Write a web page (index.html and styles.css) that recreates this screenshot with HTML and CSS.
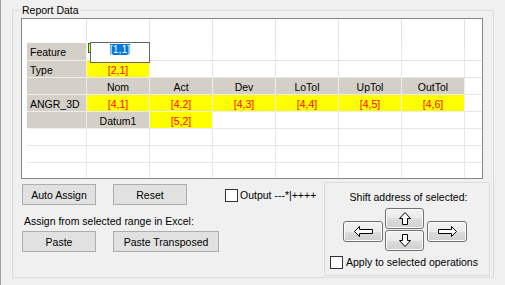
FILE: index.html
```html
<!DOCTYPE html>
<html lang="en">
<head>
    <meta charset="UTF-8">
    <meta name="viewport" content="width=device-width, initial-scale=1.0">
    <title>Report Data</title>
    <link rel="stylesheet" href="styles.css">
</head>
<body>
    <fieldset class="group">
        <legend>Report Data</legend>
        <div class="sheet">
            <div class="grid" id="grid"></div>
            <div class="mark"></div>
            <div class="editor"><span class="sel">[1,1]</span></div>
        </div>
        <div class="controls">
            <div class="assign">
                <div class="btn-row">
                    <button class="btn">Auto Assign</button>
                    <button class="btn">Reset</button>
                    <label class="check output"><span class="box"></span>Output ---*|++++</label>
                </div>
                <div class="hint">Assign from selected range in Excel:</div>
                <div class="btn-row">
                    <button class="btn">Paste</button>
                    <button class="btn btn-wide">Paste Transposed</button>
                </div>
            </div>
            <div class="shift">
                <div class="shift-title">Shift address of selected:</div>
                <div class="arrows">
                    <button class="arrow side">
                        <svg width="19" height="11" viewBox="0 0 19 11"><path d="M0.5 5.5 L5.5 0.5 V3.5 H18.5 V7.5 H5.5 V10.5 Z" fill="#fff" stroke="#000"/></svg>
                    </button>
                    <div class="updown">
                        <button class="arrow">
                            <svg width="12" height="13" viewBox="0 0 12 13"><path d="M6 0.5 L11.5 6.5 H8.5 V12.5 H3.5 V6.5 H0.5 Z" fill="#fff" stroke="#000"/></svg>
                        </button>
                        <button class="arrow">
                            <svg width="12" height="13" viewBox="0 0 12 13"><path d="M6 12.5 L11.5 6.5 H8.5 V0.5 H3.5 V6.5 H0.5 Z" fill="#fff" stroke="#000"/></svg>
                        </button>
                    </div>
                    <button class="arrow side">
                        <svg width="19" height="11" viewBox="0 0 19 11"><path d="M18.5 5.5 L13.5 0.5 V3.5 H0.5 V7.5 H13.5 V10.5 Z" fill="#fff" stroke="#000"/></svg>
                    </button>
                </div>
                <label class="check apply"><span class="box"></span>Apply to selected operations</label>
            </div>
        </div>
    </fieldset>

    <script>
        var grid = document.getElementById("grid")
        var types = { t: "top", w: "", g: "gray", gl: "gray left", y: "yellow" }
        var rows = [
            ["t", "t", "t", "t", "t", "t", "t", "t"],
            ["gl:Feature", "w", "w", "w", "w", "w", "w", "w"],
            ["gl:Type", "y:[2,1]", "w", "w", "w", "w", "w", "w"],
            ["g", "g:Nom", "g:Act", "g:Dev", "g:LoTol", "g:UpTol", "g:OutTol", "w"],
            ["gl:ANGR_3D", "y:[4,1]", "y:[4,2]", "y:[4,3]", "y:[4,4]", "y:[4,5]", "y:[4,6]", "w"],
            ["g", "g:Datum1", "y:[5,2]", "w", "w", "w", "w", "w"],
            ["w", "w", "w", "w", "w", "w", "w", "w"],
            ["w", "w", "w", "w", "w", "w", "w", "w"],
            ["w", "w", "w", "w", "w", "w", "w", "w"]
        ]

        var html = ""
        for (const row of rows) {
            html += `<div class="cell edge"></div>`
            for (const c of row) {
                const parts = c.split(":")
                html += `<div class="cell ${types[parts[0]]}">${parts[1] || ""}</div>`
            }
        }
        grid.innerHTML = html
    </script>
</body>
</html>
```

FILE: styles.css
```css
body {
    font-family: "Liberation Sans", Arial, sans-serif;
    font-size: 10.5px;
    color: #000000;
    background: #f0f0f0;
    margin: 0;
    height: 285px;
    box-sizing: border-box;
    border-left: 1px solid #a0a0a0;
    overflow: hidden;
}

.group {
    margin: 4px 0 0 11px;
    width: 482px;
    box-sizing: border-box;
    border: 1px solid #dcdcdc;
    padding: 1px 3px 1px 8px;
    min-inline-size: 0;
}

.group legend {
    padding: 0 1px;
    line-height: 13px;
}

.sheet {
    position: relative;
    width: 462px;
    height: 161px;
    box-sizing: border-box;
    border: 1px solid #828790;
    background: #ffffff;
    overflow: hidden;
}

.grid {
    display: grid;
    grid-template-columns: 5px 60px repeat(6, 63px) 17px;
    grid-template-rows: 24px 18px repeat(7, 17px);
}

.cell {
    box-sizing: border-box;
    border-right: 1px solid #e6e6e6;
    border-bottom: 1px solid #e6e6e6;
    padding-top: 1px;
    line-height: 16px;
    text-align: center;
    white-space: nowrap;
    overflow: hidden;
}

.cell:nth-child(9n) {
    border-right: none;
}

.cell.edge {
    border: none;
}

.cell.top {
    border-bottom: none;
    border-right-color: #e3e3e3;
}

.cell.gray {
    background: #d4d0c8;
    border-color: #eeeeee;
}

.cell.left {
    text-align: left;
    padding-left: 3px;
}

.cell.yellow {
    background: #ffff00;
    color: #ff0000;
    border-color: #eeeeee;
}

.mark {
    position: absolute;
    left: 66px;
    top: 24px;
    width: 1px;
    height: 8px;
    background: #ffff00;
    border: 1px solid #1e6b3c;
    border-right: none;
}

.editor {
    position: absolute;
    left: 68px;
    top: 23px;
    width: 60px;
    height: 21px;
    box-sizing: border-box;
    border: 1px solid #646464;
    background: #ffffff;
    display: flex;
    justify-content: center;
    padding-top: 1px;
}

.sel {
    display: inline-block;
    height: 11px;
    line-height: 11px;
    background: #0078d7;
    color: #ffffff;
}

.controls {
    display: flex;
    justify-content: space-between;
    margin-top: 3px;
}

.assign {
    width: 303px;
    padding-top: 2px;
}

.btn-row {
    display: flex;
    align-items: flex-start;
    padding-left: 1px;
}

.btn {
    width: 74px;
    height: 21px;
    margin: 0 17px 0 0;
    padding: 0;
    font-family: inherit;
    font-size: 10.5px;
    color: #000000;
    background: #e1e1e1;
    border: 1px solid #adadad;
}

.btn-wide {
    width: 106px;
}

.check {
    display: flex;
    align-items: center;
    line-height: 13px;
}

.check .box {
    width: 13px;
    height: 13px;
    box-sizing: border-box;
    border: 1px solid #333333;
    background: #ffffff;
    margin-right: 2px;
}

.output {
    margin-left: 21px;
    margin-top: 5px;
}

.hint {
    margin: 10px 0 3px 3px;
    line-height: 13px;
}

.shift {
    width: 166px;
    height: 94px;
    box-sizing: border-box;
    border: 1px solid #dcdcdc;
}

.shift-title {
    text-align: center;
    padding: 8px 0 0 3px;
    line-height: 13px;
}

.arrows {
    display: flex;
    align-items: flex-start;
    padding-left: 18px;
    margin-top: 4px;
}

.updown {
    display: flex;
    flex-direction: column;
    gap: 1px;
    margin: 0 3px 0 2px;
}

.arrow {
    width: 39px;
    height: 21px;
    padding: 0;
    display: flex;
    align-items: center;
    justify-content: center;
    border: 1px solid #707070;
    border-radius: 3px;
    background: linear-gradient(#f2f2f2 0%, #ebebeb 50%, #dddddd 50%, #cfcfcf 100%);
    box-shadow: inset 0 0 0 1px #fbfbfb;
}

.arrow.side {
    width: 40px;
    margin-top: 13px;
}

.apply {
    margin: 5px 0 0 5px;
}

.apply .box {
    margin-right: 3px;
}
```
